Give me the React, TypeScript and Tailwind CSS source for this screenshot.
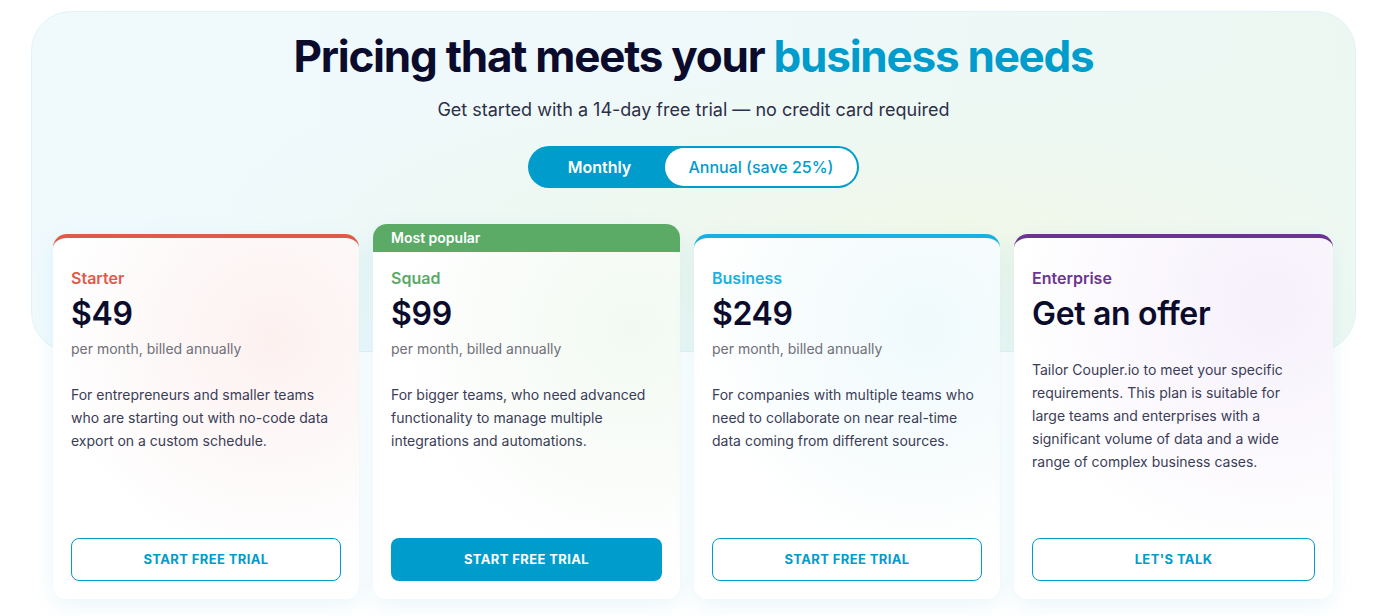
import React from 'react';

type Plan = {
  name: string;
  price: string;
  note?: string;
  description: string;
  cta: string;
  nameColor: string;
  topBorder: string;
  tint: string;
  primary?: boolean;
  popular?: boolean;
};

const plans: Plan[] = [
  {
    name: 'Starter',
    price: '$49',
    note: 'per month, billed annually',
    description: 'For entrepreneurs and smaller teams who are starting out with no-code data export on a custom schedule.',
    cta: 'START FREE TRIAL',
    nameColor: 'text-[#e05a47]',
    topBorder: 'border-t-[4px] border-[#e05a47]',
    tint: 'bg-[radial-gradient(circle_at_72%_28%,#fdf1f0_0%,#fdf8f8_35%,#ffffff_65%)]',
  },
  {
    name: 'Squad',
    price: '$99',
    note: 'per month, billed annually',
    description: 'For bigger teams, who need advanced functionality to manage multiple integrations and automations.',
    cta: 'START FREE TRIAL',
    nameColor: 'text-[#5baa66]',
    topBorder: '',
    tint: 'bg-[radial-gradient(circle_at_85%_22%,#f2f9f2_0%,#f9fcf9_35%,#ffffff_65%)]',
    primary: true,
    popular: true,
  },
  {
    name: 'Business',
    price: '$249',
    note: 'per month, billed annually',
    description: 'For companies with multiple teams who need to collaborate on near real-time data coming from different sources.',
    cta: 'START FREE TRIAL',
    nameColor: 'text-[#1ab0e0]',
    topBorder: 'border-t-[4px] border-[#18b0e2]',
    tint: 'bg-[radial-gradient(circle_at_75%_25%,#effafc_0%,#f7fcfd_35%,#ffffff_65%)]',
  },
  {
    name: 'Enterprise',
    price: 'Get an offer',
    description: 'Tailor Coupler.io to meet your specific requirements. This plan is suitable for large teams and enterprises with a significant volume of data and a wide range of complex business cases.',
    cta: "LET'S TALK",
    nameColor: 'text-[#6b3590]',
    topBorder: 'border-t-[4px] border-[#6a3592]',
    tint: 'bg-[radial-gradient(circle_at_80%_18%,#f6f0fb_0%,#fbf8fd_35%,#ffffff_65%)]',
  },
];

const PlanCard = ({ plan }: { plan: Plan }) => {
  const body = (
    <div className={`flex flex-1 flex-col px-[18px] pb-[18px] ${plan.popular ? 'pt-[14px]' : 'pt-[28px]'}`}>
      <div className={`text-[16px] leading-[24px] font-semibold ${plan.nameColor}`}>{plan.name}</div>
      <div className="mt-[4px] text-[32px] leading-[40px] font-semibold text-[#0b0b2c] tracking-[-0.01em]">
        {plan.price}
      </div>
      {plan.note && <div className="mt-[5px] text-[14px] leading-[20px] text-[#6f6f7a]">{plan.note}</div>}
      <p className="mt-[24px] text-[14px] leading-[23px] text-[#3b3d57]">{plan.description}</p>
      <button
        className={`mt-auto h-[43px] w-full rounded-[8px] text-[13px] font-bold tracking-[0.03em] ${
          plan.primary
            ? 'bg-[#009ccc] text-white'
            : 'border border-[#009ccc] bg-white text-[#009ccc]'
        }`}
      >
        {plan.cta}
      </button>
    </div>
  );

  if (plan.popular) {
    return (
      <div className="flex h-[375px] flex-col overflow-hidden rounded-[14px] bg-white shadow-[0_6px_22px_rgba(0,150,200,0.09)]">
        <div className="h-[28px] bg-[#5baa66] px-[18px] pt-[4px] text-[14px] leading-[20px] font-semibold text-white">
          Most popular
        </div>
        <div className={`flex flex-1 flex-col ${plan.tint}`}>{body}</div>
      </div>
    );
  }

  return (
    <div
      className={`mt-[10px] flex h-[365px] flex-col rounded-[14px] bg-white shadow-[0_6px_22px_rgba(0,150,200,0.09)] ${plan.topBorder} ${plan.tint}`}
    >
      {body}
    </div>
  );
};

export default function App() {
  return (
    <div
      className="h-[616px] w-full overflow-hidden bg-white"
      style={{ fontFamily: 'Inter, "Noto Sans", sans-serif' }}
    >
      <div className="pl-[31px] pt-[11px]">
        <div className="w-[1325px]">
          {/* hero panel */}
          <div className="flex h-[341px] flex-col items-center rounded-[40px] border border-[#e2f3f8] bg-[radial-gradient(ellipse_at_70%_65%,#f1f8e9_0%,#eef8f2_30%,rgba(239,249,252,0)_60%),linear-gradient(90deg,#f0fafd_0%,#eff9fb_50%,#ecf7f1_100%)] pt-[18px]">
            <h1 className="text-[44px] leading-[52px] font-bold tracking-[-0.028em] text-[#0b0b2c]">
              Pricing that meets your <span className="text-[#009ccc]">business needs</span>
            </h1>
            <p className="mt-[14px] text-[18px] leading-[28px] text-[#2d2f48]">
              Get started with a 14-day free trial — no credit card required
            </p>
            <div className="mt-[22px] flex h-[42px] w-[331px] items-center rounded-full bg-[#009ccc] p-[2px]">
              <div className="flex w-[135px] justify-center pl-[4px] text-[16px] font-semibold text-white">Monthly</div>
              <div className="flex h-[38px] flex-1 items-center justify-center rounded-full bg-white text-[16px] font-medium text-[#009ccc]">
                Annual (save 25%)
              </div>
            </div>
          </div>

          {/* plans */}
          <div className="mt-[-128px] grid grid-cols-[306px_307px_306px_319px] items-start gap-[14px] pl-[22px]">
            {plans.map(plan => (
              <PlanCard key={plan.name} plan={plan} />
            ))}
          </div>
        </div>
      </div>
    </div>
  );
}
